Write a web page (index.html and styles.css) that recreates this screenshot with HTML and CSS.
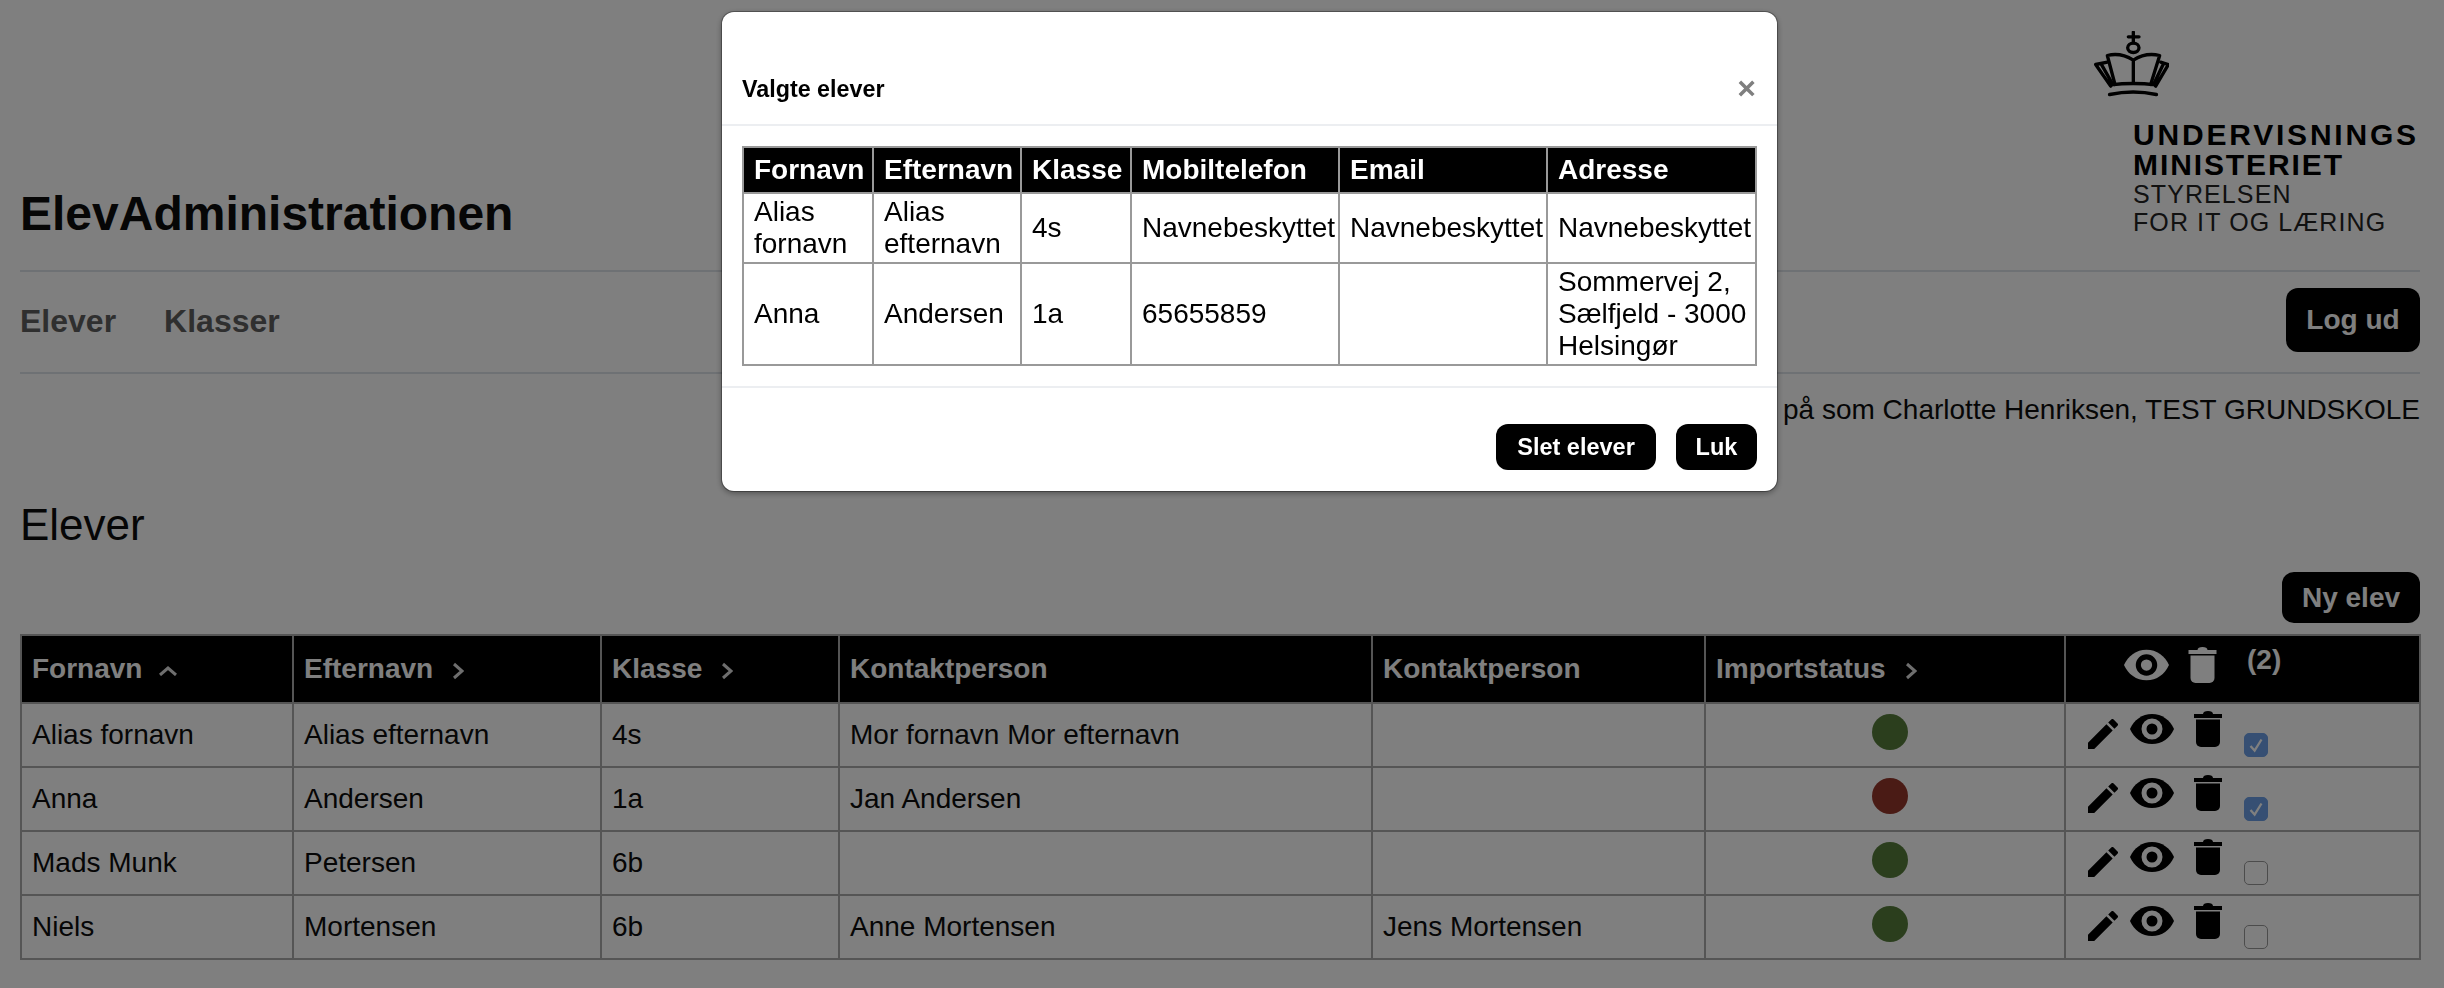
FILE: index.html
```html
<!DOCTYPE html>
<html lang="da">
<head>
<meta charset="utf-8">
<title>ElevAdministrationen</title>
<link rel="stylesheet" href="styles.css">
</head>
<body>
<div class="page">
  <header class="top">
    <h1 class="brand">ElevAdministrationen</h1>
    <div class="logo">
      <svg class="crown" viewBox="25 25 225 200" fill="none" stroke="#000" stroke-width="10" stroke-linecap="round" stroke-linejoin="round">
        <path d="M143 28V60M128 42H160"/>
        <ellipse cx="143" cy="75" rx="17" ry="14"/>
        <path d="M143 112Q105 88 65 98L88 185M143 112Q180 88 222 98L195 185M143 112V180"/>
        <path d="M65 118L30 125L75 190M48 126L80 182M225 118L248 125L210 190M232 126L205 182"/>
        <path d="M75 186Q143 178 210 186"/>
        <path d="M72 215Q143 200 212 215" stroke-width="11"/>
      </svg>
      <div class="logo-bold">UNDERVISNINGS</div>
      <div class="logo-bold logo-second">MINISTERIET</div>
      <div class="logo-thin">STYRELSEN</div>
      <div class="logo-thin">FOR IT OG LÆRING</div>
    </div>
  </header>

  <nav class="nav">
    <div class="nav-links">
      <a class="nav-link">Elever</a>
      <a class="nav-link">Klasser</a>
    </div>
    <button class="btn btn-lg">Log ud</button>
  </nav>

  <p class="status">Du er logget på som Charlotte Henriksen, TEST GRUNDSKOLE</p>

  <h2 class="title">Elever</h2>

  <div class="toolbar"><button class="btn btn-new">Ny elev</button></div>

  <table class="students">
    <colgroup>
      <col class="c1"><col class="c2"><col class="c3"><col class="c4"><col class="c5"><col class="c6"><col class="c7">
    </colgroup>
    <thead>
      <tr>
        <th>Fornavn<svg class="sort-up" viewBox="0 0 20 10"><path d="M2 9L10 2L18 9"/></svg></th>
        <th>Efternavn<svg class="sort-right" viewBox="0 0 12 18"><path d="M2 2L10 9L2 16"/></svg></th>
        <th>Klasse<svg class="sort-right" viewBox="0 0 12 18"><path d="M2 2L10 9L2 16"/></svg></th>
        <th>Kontaktperson</th>
        <th>Kontaktperson</th>
        <th>Importstatus<svg class="sort-right" viewBox="0 0 12 18"><path d="M2 2L10 9L2 16"/></svg></th>
        <th>
          <div class="head-actions">
            <svg class="eye head-eye" viewBox="0 0 44 30"><path class="eye-shape" d="M22 0C12 0 4 6 0 15c4 9 12 15 22 15s18-6 22-15C40 6 32 0 22 0z"/><circle class="eye-ring" cx="22" cy="15" r="8"/></svg>
            <svg class="trash head-trash" viewBox="0 0 28 36"><path d="M9 3C9 1 11 0 14 0s5 1 5 3h9v4H0V3z"/><path d="M2 8.5h24V31a5 5 0 0 1-5 5H7a5 5 0 0 1-5-5z"/></svg>
            <span class="count">(2)</span>
          </div>
        </th>
      </tr>
    </thead>
    <tbody>
      <tr>
        <td>Alias fornavn</td><td>Alias efternavn</td><td>4s</td><td>Mor fornavn Mor efternavn</td><td></td>
        <td class="status-cell"><span class="dot dot-ok"></span></td>
        <td>
          <div class="actions">
            <svg class="pencil" viewBox="3 3 18 18"><path d="M3 17.25V21h3.75L17.81 9.94l-3.75-3.75L3 17.25zM20.71 7.04a1 1 0 0 0 0-1.41l-2.34-2.34a1 1 0 0 0-1.41 0l-1.83 1.83 3.75 3.75 1.83-1.83z"/></svg>
            <svg class="eye" viewBox="0 0 44 30"><path class="eye-shape" d="M22 0C12 0 4 6 0 15c4 9 12 15 22 15s18-6 22-15C40 6 32 0 22 0z"/><circle class="eye-ring" cx="22" cy="15" r="8"/></svg>
            <svg class="trash" viewBox="0 0 28 36"><path d="M9 3C9 1 11 0 14 0s5 1 5 3h9v4H0V3z"/><path d="M2 8.5h24V31a5 5 0 0 1-5 5H7a5 5 0 0 1-5-5z"/></svg>
            <span class="check check-on"><svg viewBox="0 0 24 24"><path d="M6 13L10.5 18L18 6"/></svg></span>
          </div>
        </td>
      </tr>
      <tr>
        <td>Anna</td><td>Andersen</td><td>1a</td><td>Jan Andersen</td><td></td>
        <td class="status-cell"><span class="dot dot-bad"></span></td>
        <td>
          <div class="actions">
            <svg class="pencil" viewBox="3 3 18 18"><path d="M3 17.25V21h3.75L17.81 9.94l-3.75-3.75L3 17.25zM20.71 7.04a1 1 0 0 0 0-1.41l-2.34-2.34a1 1 0 0 0-1.41 0l-1.83 1.83 3.75 3.75 1.83-1.83z"/></svg>
            <svg class="eye" viewBox="0 0 44 30"><path class="eye-shape" d="M22 0C12 0 4 6 0 15c4 9 12 15 22 15s18-6 22-15C40 6 32 0 22 0z"/><circle class="eye-ring" cx="22" cy="15" r="8"/></svg>
            <svg class="trash" viewBox="0 0 28 36"><path d="M9 3C9 1 11 0 14 0s5 1 5 3h9v4H0V3z"/><path d="M2 8.5h24V31a5 5 0 0 1-5 5H7a5 5 0 0 1-5-5z"/></svg>
            <span class="check check-on"><svg viewBox="0 0 24 24"><path d="M6 13L10.5 18L18 6"/></svg></span>
          </div>
        </td>
      </tr>
      <tr>
        <td>Mads Munk</td><td>Petersen</td><td>6b</td><td></td><td></td>
        <td class="status-cell"><span class="dot dot-ok"></span></td>
        <td>
          <div class="actions">
            <svg class="pencil" viewBox="3 3 18 18"><path d="M3 17.25V21h3.75L17.81 9.94l-3.75-3.75L3 17.25zM20.71 7.04a1 1 0 0 0 0-1.41l-2.34-2.34a1 1 0 0 0-1.41 0l-1.83 1.83 3.75 3.75 1.83-1.83z"/></svg>
            <svg class="eye" viewBox="0 0 44 30"><path class="eye-shape" d="M22 0C12 0 4 6 0 15c4 9 12 15 22 15s18-6 22-15C40 6 32 0 22 0z"/><circle class="eye-ring" cx="22" cy="15" r="8"/></svg>
            <svg class="trash" viewBox="0 0 28 36"><path d="M9 3C9 1 11 0 14 0s5 1 5 3h9v4H0V3z"/><path d="M2 8.5h24V31a5 5 0 0 1-5 5H7a5 5 0 0 1-5-5z"/></svg>
            <span class="check"></span>
          </div>
        </td>
      </tr>
      <tr>
        <td>Niels</td><td>Mortensen</td><td>6b</td><td>Anne Mortensen</td><td>Jens Mortensen</td>
        <td class="status-cell"><span class="dot dot-ok"></span></td>
        <td>
          <div class="actions">
            <svg class="pencil" viewBox="3 3 18 18"><path d="M3 17.25V21h3.75L17.81 9.94l-3.75-3.75L3 17.25zM20.71 7.04a1 1 0 0 0 0-1.41l-2.34-2.34a1 1 0 0 0-1.41 0l-1.83 1.83 3.75 3.75 1.83-1.83z"/></svg>
            <svg class="eye" viewBox="0 0 44 30"><path class="eye-shape" d="M22 0C12 0 4 6 0 15c4 9 12 15 22 15s18-6 22-15C40 6 32 0 22 0z"/><circle class="eye-ring" cx="22" cy="15" r="8"/></svg>
            <svg class="trash" viewBox="0 0 28 36"><path d="M9 3C9 1 11 0 14 0s5 1 5 3h9v4H0V3z"/><path d="M2 8.5h24V31a5 5 0 0 1-5 5H7a5 5 0 0 1-5-5z"/></svg>
            <span class="check"></span>
          </div>
        </td>
      </tr>
    </tbody>
  </table>
</div>

<div class="backdrop"></div>

<div class="modal">
  <div class="modal-head">
    <span class="modal-title">Valgte elever</span>
    <span class="modal-close">×</span>
  </div>
  <div class="modal-body">
    <table class="selected">
      <colgroup>
        <col class="m1"><col class="m2"><col class="m3"><col class="m4"><col class="m5"><col class="m6">
      </colgroup>
      <thead>
        <tr><th>Fornavn</th><th>Efternavn</th><th>Klasse</th><th>Mobiltelefon</th><th>Email</th><th>Adresse</th></tr>
      </thead>
      <tbody>
        <tr class="row-a"><td>Alias fornavn</td><td>Alias efternavn</td><td>4s</td><td>Navnebeskyttet</td><td>Navnebeskyttet</td><td>Navnebeskyttet</td></tr>
        <tr class="row-b"><td>Anna</td><td>Andersen</td><td>1a</td><td>65655859</td><td></td><td>Sommervej 2, Sælfjeld - 3000 Helsingør</td></tr>
      </tbody>
    </table>
  </div>
  <div class="modal-foot">
    <button class="btn btn-sm btn-delete">Slet elever</button>
    <button class="btn btn-sm btn-close">Luk</button>
  </div>
</div>
</body>
</html>
```
FILE: styles.css
```css
* { box-sizing: border-box; }

html, body { margin: 0; height: 100%; }

body {
  background: #fff;
  color: #0c0c0c;
  font-family: "Liberation Sans", Arial, sans-serif;
  font-size: 28px;
  line-height: 32px;
  overflow: hidden;
}

.page { padding: 0 24px 0 20px; }

/* Header */
.top {
  display: flex;
  justify-content: space-between;
  align-items: flex-end;
  height: 272px;
  border-bottom: 2px solid #dde2e8;
}

.brand {
  margin: 0 0 30px;
  font-size: 48px;
  line-height: 52px;
  font-weight: 700;
}

.logo {
  width: 326px;
  height: 272px;
  padding-top: 33px;
  color: #000;
}

.crown { display: block; width: 75px; height: 67px; margin-bottom: 22px; }

.logo-bold,
.logo-thin { padding-left: 39px; white-space: nowrap; }

.logo-bold { font-size: 30px; line-height: 30px; font-weight: 700; letter-spacing: 2.8px; }
.logo-second { letter-spacing: 1.9px; }
.logo-thin { font-size: 25px; line-height: 28px; letter-spacing: 1.1px; color: #222; }

/* Nav */
.nav {
  display: flex;
  justify-content: space-between;
  align-items: center;
  padding: 16px 0 20px;
  border-bottom: 2px solid #dde2e8;
}

.nav-links { display: flex; gap: 48px; padding-top: 2px; }
.nav-link { font-size: 32px; line-height: 36px; font-weight: 700; color: #5e5e5e; }

.btn {
  border: 0;
  background: #000;
  color: #fff;
  font-family: inherit;
  font-weight: 700;
  border-radius: 12px;
}

.btn-lg { width: 134px; height: 64px; font-size: 28px; }
.btn-new { width: 138px; height: 51px; font-size: 28px; }
.btn-sm { height: 46px; padding: 0; font-size: 23.5px; }
.btn-delete { width: 160px; }
.btn-close { width: 81px; }

.status { margin: 20px 0 0; text-align: right; }

.title {
  margin: 75px 0 0;
  font-size: 44px;
  line-height: 48px;
  font-weight: 400;
}

.toolbar { display: flex; justify-content: flex-end; margin: 23px 0 11px; }

/* Students table */
.students {
  width: 2399px;
  table-layout: fixed;
  border-collapse: collapse;
}

.c1 { width: 272px; }
.c2 { width: 308px; }
.c3 { width: 238px; }
.c4 { width: 533px; }
.c5 { width: 333px; }
.c6 { width: 360px; }
.c7 { width: 355px; }

.students th,
.students td {
  border: 2px solid #aaa;
  padding: 0 10px;
  text-align: left;
}

.students thead tr { height: 68px; }
.students tbody tr { height: 64px; }

.students th { background: #000; color: #fff; font-weight: 700; }

.sort-up,
.sort-right {
  fill: none;
  stroke: #ddd;
  stroke-width: 3;
  vertical-align: middle;
}

.sort-up { width: 20px; height: 10px; margin-left: 16px; }
.sort-right { width: 12px; height: 18px; margin-left: 19px; }

.students .status-cell { padding-left: 20px; }

.dot { display: block; width: 36px; height: 36px; margin: 0 auto 6px; border-radius: 50%; }
.dot-ok { background: #567d3b; }
.dot-bad { background: #94362a; }

.head-actions,
.actions { display: flex; align-items: flex-start; }

.head-actions { height: 66px; padding-left: 48px; }
.actions { height: 62px; padding-left: 12px; color: #000; }

.eye, .trash, .pencil { flex: none; fill: currentColor; }

.eye-shape { fill: currentColor; }
.eye-ring { fill: none; stroke: #fff; stroke-width: 5; }

.pencil { width: 30px; height: 30px; margin-top: 15px; margin-right: 12px; }

.eye { width: 44px; height: 30px; margin-top: 10px; margin-right: 20px; }
.trash { width: 28px; height: 36px; margin-top: 7px; margin-right: 22px; }

.head-eye { width: 45px; height: 32px; margin-top: 13px; margin-right: 19px; }
.head-eye .eye-ring { stroke: #000; }
.head-trash { width: 29px; height: 36px; margin-top: 11px; margin-right: 30px; }
.count { margin-top: 8px; }

.check {
  flex: none;
  width: 24px;
  height: 24px;
  margin-top: 29px;
  border: 1px solid #999;
  border-radius: 5px;
}

.check svg { display: block; width: 100%; height: 100%; fill: none; stroke: #fff; stroke-width: 2.5; }
.check-on { background: #6c9fe6; border-color: #6c9fe6; }

/* Overlay */
.backdrop {
  position: fixed;
  inset: 0;
  background: rgba(0, 0, 0, 0.5);
}

.modal {
  position: fixed;
  top: 12px;
  left: 722px;
  width: 1055px;
  height: 479px;
  display: flex;
  flex-direction: column;
  background: #fff;
  border-radius: 12px;
  box-shadow: 0 0 0 1px rgba(0, 0, 0, 0.3), 0 2px 6px rgba(0, 0, 0, 0.4);
}

.modal-head {
  display: flex;
  justify-content: space-between;
  align-items: flex-end;
  height: 114px;
  padding: 0 21px 19px 20px;
  border-bottom: 2px solid #eceef1;
}

.modal-title { font-size: 23.3px; font-weight: 700; line-height: 32px; color: #000; }
.modal-close { font-size: 32px; font-weight: 700; line-height: 34px; color: #7f7f7f; }

.modal-body { height: 262px; padding: 20px; border-bottom: 2px solid #eceef1; }

.selected { width: 1013px; table-layout: fixed; border-collapse: collapse; }

.m1 { width: 130px; }
.m2 { width: 148px; }
.m3 { width: 110px; }
.m4 { width: 208px; }
.m5 { width: 208px; }
.m6 { width: 209px; }

.selected th,
.selected td {
  border: 2px solid #999;
  padding: 0 0 0 10px;
  text-align: left;
  color: #000;
}

.selected th { height: 46px; background: #000; color: #fff; font-weight: 700; }
.row-a { height: 70px; }
.row-b { height: 102px; }

.modal-foot {
  display: flex;
  justify-content: flex-end;
  gap: 20px;
  padding: 36px 20px 0;
}
```
